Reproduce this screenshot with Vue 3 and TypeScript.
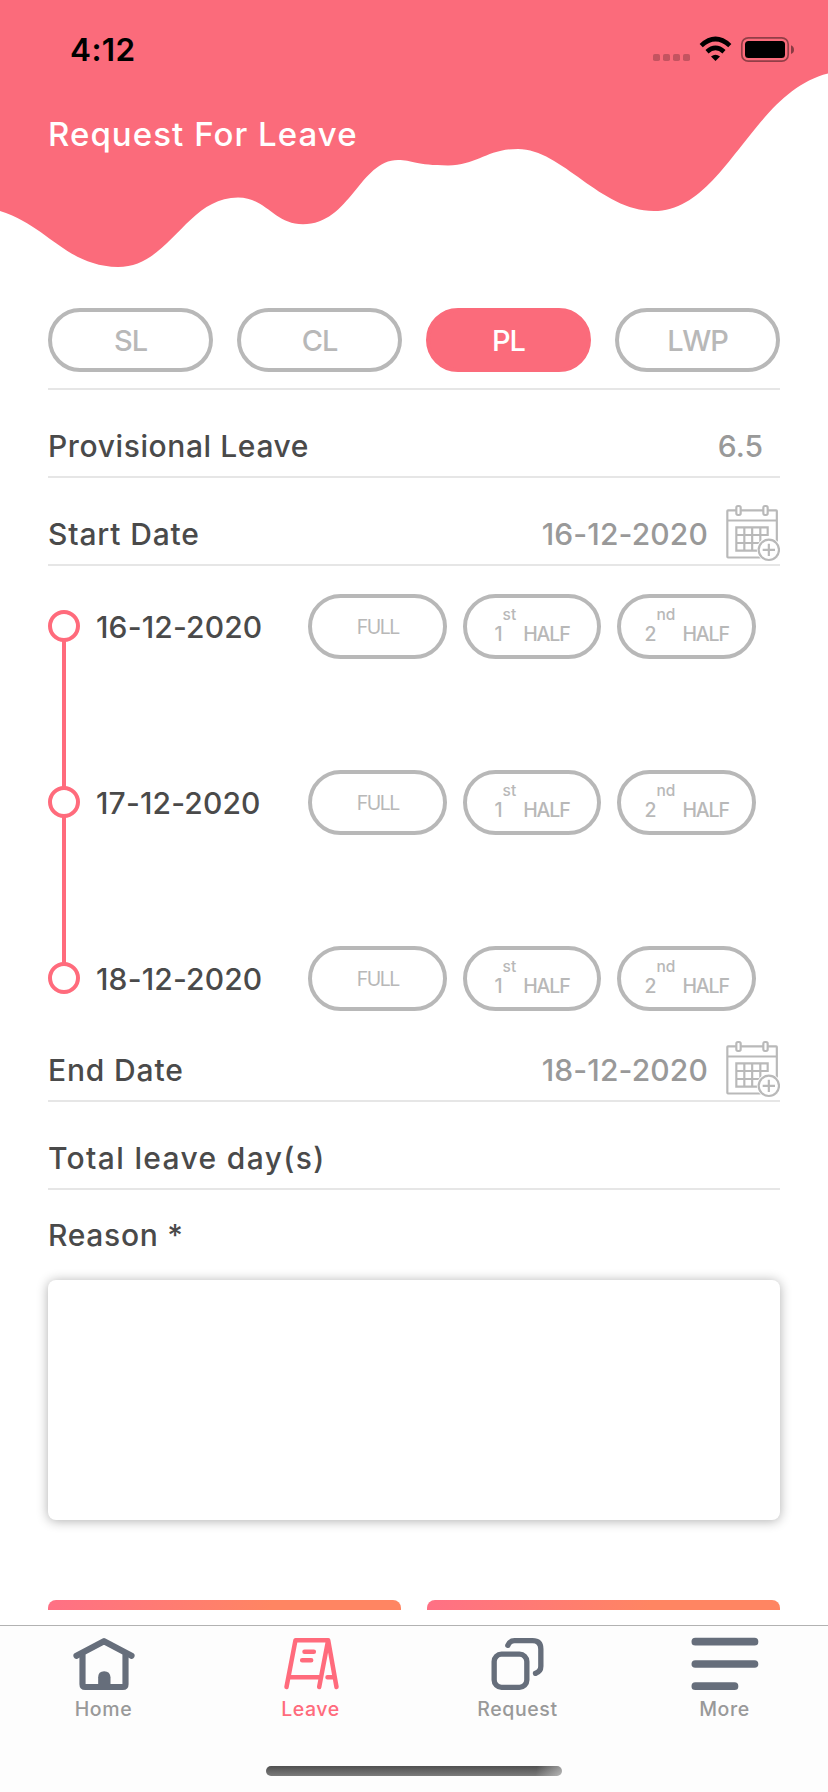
<script setup lang="ts">
import { ref } from 'vue'

const wave = [
  'M0 0V211C48 226 66 266 118 267C170 267 186 197.5 238 197.5',
  'C266 197.5 274 224.3 303 224.3C350 224.3 360 160 398 160',
  'C412 160 416 165.4 448 165.4C478 165.4 486 149 518 149',
  'C562 149 600 211 654 211C724 211 752 92 828 73.5V0Z',
].join('')
const leaveTypes = ['SL', 'CL', 'PL', 'LWP']
const selected = ref('PL')
const days = ['16-12-2020', '17-12-2020', '18-12-2020']
const reason = ref('')
const tabs = [
  { id: 'home', label: 'Home' },
  { id: 'leave', label: 'Leave' },
  { id: 'request', label: 'Request' },
  { id: 'more', label: 'More' },
]
const activeTab = ref('leave')
</script>

<template>
  <div class="screen">
    <header class="header">
      <svg class="wave" viewBox="0 0 828 270"><path :d="wave" fill="#fb6b7b" /></svg>
      <div class="status">
        <span class="time">4:12</span>
        <svg class="status-icons" width="144" height="28" viewBox="652 36 144 28">
          <g fill="#000" fill-opacity=".22">
            <rect x="653" y="54" width="7" height="7" rx="1.8" />
            <rect x="663" y="54" width="7" height="7" rx="1.8" />
            <rect x="673" y="54" width="7" height="7" rx="1.8" />
            <rect x="683" y="54" width="7" height="7" rx="1.8" />
          </g>
          <path d="M701.2 45.6Q715.5 32.4 729.8 45.6" fill="none" stroke="#000" stroke-width="4.6" />
          <path d="M707 51.7Q715.5 44.2 724 51.7" fill="none" stroke="#000" stroke-width="4.6" />
          <path d="M715.5 61L711 56.5Q715.5 52.9 720 56.5Z" />
          <rect x="741.8" y="37.8" width="46.4" height="23.4" rx="6.5" fill="none" stroke="#000" stroke-opacity=".42" stroke-width="1.7" />
          <rect x="745" y="41" width="40" height="17" rx="3.5" />
          <path d="M791 45.3Q794 46.5 794 49.7T791 54Z" fill-opacity=".45" />
        </svg>
      </div>
      <h1 class="title">Request For Leave</h1>
    </header>

    <main class="content">
      <div class="types">
        <button
          v-for="type in leaveTypes"
          :key="type"
          class="type"
          :class="{ selected: selected === type }"
          @click="selected = type"
        >{{ type }}</button>
      </div>

      <div class="row">
        <span class="label provisional">Provisional Leave</span>
        <span class="value amount">6.5</span>
      </div>
      <div class="row">
        <span class="label start">Start Date</span>
        <span class="value date">16-12-2020</span>
        <svg class="calendar"><use href="#calendar-add" width="56" height="58" /></svg>
      </div>

      <div class="timeline">
        <div v-for="day in days" :key="day" class="day">
          <span class="node"></span>
          <span class="day-date">{{ day }}</span>
          <div class="options">
            <button class="option full">FULL</button>
            <button class="option"><span class="num">1</span><span class="ord">st</span><span class="half">HALF</span></button>
            <button class="option"><span class="num">2</span><span class="ord">nd</span><span class="half">HALF</span></button>
          </div>
        </div>
      </div>

      <div class="row end-row">
        <span class="label end">End Date</span>
        <span class="value date">18-12-2020</span>
        <svg class="calendar"><use href="#calendar-add" width="56" height="58" /></svg>
      </div>
      <div class="row"><span class="label total">Total leave day(s)</span></div>
      <label class="label reason-label" for="reason">Reason *</label>
      <textarea id="reason" v-model="reason" class="reason"></textarea>
      <div class="actions"><span class="action"></span><span class="action"></span></div>
    </main>

    <nav class="tabs">
      <button
        v-for="tab in tabs"
        :key="tab.id"
        class="tab"
        :class="[tab.id, { active: activeTab === tab.id }]"
        @click="activeTab = tab.id"
      >
        <svg v-if="tab.id === 'home'" class="tab-icon" viewBox="202.5 408 216 168" fill="none" stroke="#666e7b">
          <path d="M228 467.500L310.500 423.500L393 467.500" stroke-width="18.500" stroke-linecap="round" stroke-linejoin="round" />
          <path d="M246 463V553Q246 561 254 561H367Q375 561 375 553V463" stroke-width="18.500" />
          <path d="M293 558V532Q293 514 311 514T330 532V558Z" fill="#666e7b" stroke="none" />
        </svg>
        <svg v-else-if="tab.id === 'leave'" class="tab-icon" viewBox="823.5 408 216 168" fill="none" stroke="#ff6b7c" stroke-width="13.500" stroke-linecap="round" stroke-linejoin="round">
          <path d="M858 561L885 420.500H983L956 561M983 420.500L1008 561M866 532H960M981 532H1001M912 455.500H940M905 480.500H932" />
        </svg>
        <svg v-else-if="tab.id === 'request'" class="tab-icon" viewBox="202.5 408 216 168" fill="none" stroke="#666e7b" stroke-width="16" stroke-linecap="round">
          <rect x="239" y="462.500" width="98" height="99.500" rx="22" />
          <path d="M280 436Q286 422 300 422H354Q379 422 379 447V499Q379 515 363 520" />
        </svg>
        <svg v-else class="tab-icon" viewBox="823.5 408 216 168" fill="none" stroke="#666e7b" stroke-width="23" stroke-linecap="round">
          <path d="M842.500 425H1020M842.500 492H1020M842.500 558.500H960" />
        </svg>
        <span class="tab-label">{{ tab.label }}</span>
      </button>
      <span class="home-indicator"></span>
    </nav>

    <svg class="symbols">
      <symbol id="calendar-add" viewBox="912 642 168 174">
        <g fill="none" stroke="#b9b9b9" stroke-width="6.500">
          <rect x="922" y="661" width="148.500" height="141.500" rx="2" />
          <path d="M922 691.500H1070" />
          <rect x="949" y="648" width="13" height="27" rx="5" fill="#fff" />
          <rect x="1030" y="648" width="13" height="27" rx="5" fill="#fff" />
          <path d="M949 785V712H1043V735H949M949 759H1022M949 782H1022M973 712V782M996.500 712V782M1021 712V782" />
          <circle cx="1046.500" cy="779" r="36" fill="#fff" stroke="none" />
          <circle cx="1046.500" cy="779.500" r="30.500" />
          <path d="M1028 779.500H1065M1046.500 761V798" />
        </g>
      </symbol>
    </svg>
  </div>
</template>

<style>
body {
  margin: 0;
}
</style>

<style scoped>
* {
  box-sizing: border-box;
}
.screen {
  display: flex;
  flex-direction: column;
  width: 828px;
  height: 1792px;
  overflow: hidden;
  background: #fff;
  color: #4a4a4a;
  font-family: Inter, "Open Sans", sans-serif;
  font-weight: 500;
}
button {
  padding: 0;
  border: 0;
  background: none;
  color: inherit;
  font: inherit;
  white-space: nowrap;
}
.header {
  position: relative;
  height: 308px;
  flex: none;
}
.wave {
  position: absolute;
  inset: 0 0 auto;
  width: 828px;
  height: 270px;
}
.status {
  position: relative;
  display: flex;
  justify-content: space-between;
  padding: 32px 32px 0 70px;
  height: 96px;
}
.time {
  color: #000;
  font-size: 31.5px;
  font-weight: 600;
  line-height: 36px;
  letter-spacing: 0.4px;
}
.status-icons {
  margin-top: 4px;
}
.title {
  position: relative;
  margin: 14px 0 0 48px;
  color: #fff;
  font-size: 33px;
  font-weight: 500;
  line-height: 48px;
  letter-spacing: 1.05px;
}
.content {
  display: flex;
  flex-direction: column;
  flex: none;
  height: 1302px;
  padding: 0 48px;
  overflow: hidden;
}
.types {
  display: grid;
  grid-template-columns: repeat(4, 165px);
  gap: 24px;
  height: 82px;
  flex: none;
  border-bottom: 2px solid #e6e6e6;
}
.type {
  height: 64px;
  border: 4px solid #b8b8b8;
  border-radius: 32px;
  color: #b8b8b8;
  font-size: 29px;
  line-height: 58px;
  letter-spacing: -1px;
}
.type.selected {
  border-color: #fb6b7b;
  background: #fb6b7b;
  color: #fff;
}
.row {
  display: flex;
  align-items: flex-end;
  height: 88px;
  flex: none;
  border-bottom: 2px solid #e6e6e6;
}
.label,
.value,
.day-date {
  font-size: 30px;
  line-height: 36px;
  white-space: nowrap;
}
.row .label,
.row .value {
  margin-bottom: 12px;
}
.provisional {
  letter-spacing: 0.6px;
}
.start,
.end {
  letter-spacing: 0.85px;
}
.total {
  letter-spacing: 1.35px;
}
.value {
  margin-left: auto;
  color: #999;
}
.date,
.day-date {
  letter-spacing: 0.15px;
}
.amount {
  margin-right: 17px;
}
.calendar {
  flex: none;
  width: 56px;
  height: 58px;
  margin-left: 16px;
  margin-bottom: 2px;
}
.timeline {
  flex: none;
  padding-top: 28px;
}
.day {
  position: relative;
  display: flex;
  align-items: center;
  height: 65px;
}
.day + .day {
  margin-top: 111px;
}
.day:not(:last-child)::after {
  content: "";
  position: absolute;
  left: 14px;
  top: 47px;
  width: 4px;
  height: 146px;
  background: #ff6b7c;
}
.node {
  width: 32px;
  height: 32px;
  flex: none;
  margin-top: -1px;
  border: 4px solid #ff6b7c;
  border-radius: 50%;
}
.day-date {
  width: 212px;
  margin-left: 16px;
}
.options {
  display: grid;
  grid-template-columns: repeat(3, 138.7px);
  gap: 16px;
}
.option {
  display: flex;
  justify-content: center;
  height: 65px;
  border: 4px solid #b8b8b8;
  border-radius: 32.5px;
  color: #b8b8b8;
  font-size: 19.5px;
  line-height: 24px;
  padding-top: 24px;
}
.full {
  padding-top: 17px;
  padding-left: 1px;
  font-weight: 400;
  letter-spacing: -1.5px;
}
.ord {
  margin-top: -19px;
  font-size: 15.5px;
}
.half {
  margin-left: 7px;
  letter-spacing: -1.1px;
}
.end-row {
  height: 91px;
}
.reason-label {
  flex: none;
  height: 63px;
  margin-top: 27px;
  letter-spacing: 0.7px;
}
.reason {
  height: 240px;
  flex: none;
  padding: 16px;
  border: 0;
  border-radius: 8px;
  outline: 0;
  resize: none;
  background: #fff;
  font: inherit;
  box-shadow: 0 1px 12px rgba(0, 0, 0, 0.32);
}
.actions {
  display: grid;
  grid-template-columns: 353px 353px;
  justify-content: space-between;
  margin-top: 80px;
}
.action {
  height: 80px;
  border-radius: 8px;
  background: linear-gradient(105deg, #ff7085, #ff8562 60%, #ff8562);
}
.tabs {
  position: relative;
  display: grid;
  grid-template-columns: repeat(4, 207px);
  height: 167px;
  margin-top: 15px;
  border-top: 1px solid #b2b2b2;
  background: #fdfdfd;
}
.tab {
  display: flex;
  flex-direction: column;
  align-items: center;
  padding-top: 10px;
  color: #999;
}
.tab.active {
  color: #ff6b7c;
}
.tab-icon {
  width: 72px;
  height: 56px;
}
.tab-label {
  margin-top: 5px;
  font-size: 19.5px;
  line-height: 24px;
  letter-spacing: 0.6px;
}
.home-indicator {
  position: absolute;
  left: 266px;
  bottom: 16px;
  width: 296px;
  height: 10px;
  border-radius: 5px;
  background: linear-gradient(100deg, transparent 91%, rgba(255, 255, 255, 0.45)), linear-gradient(#505050, #7b7b7b);
}
.symbols {
  position: absolute;
  width: 0;
  height: 0;
}
</style>
